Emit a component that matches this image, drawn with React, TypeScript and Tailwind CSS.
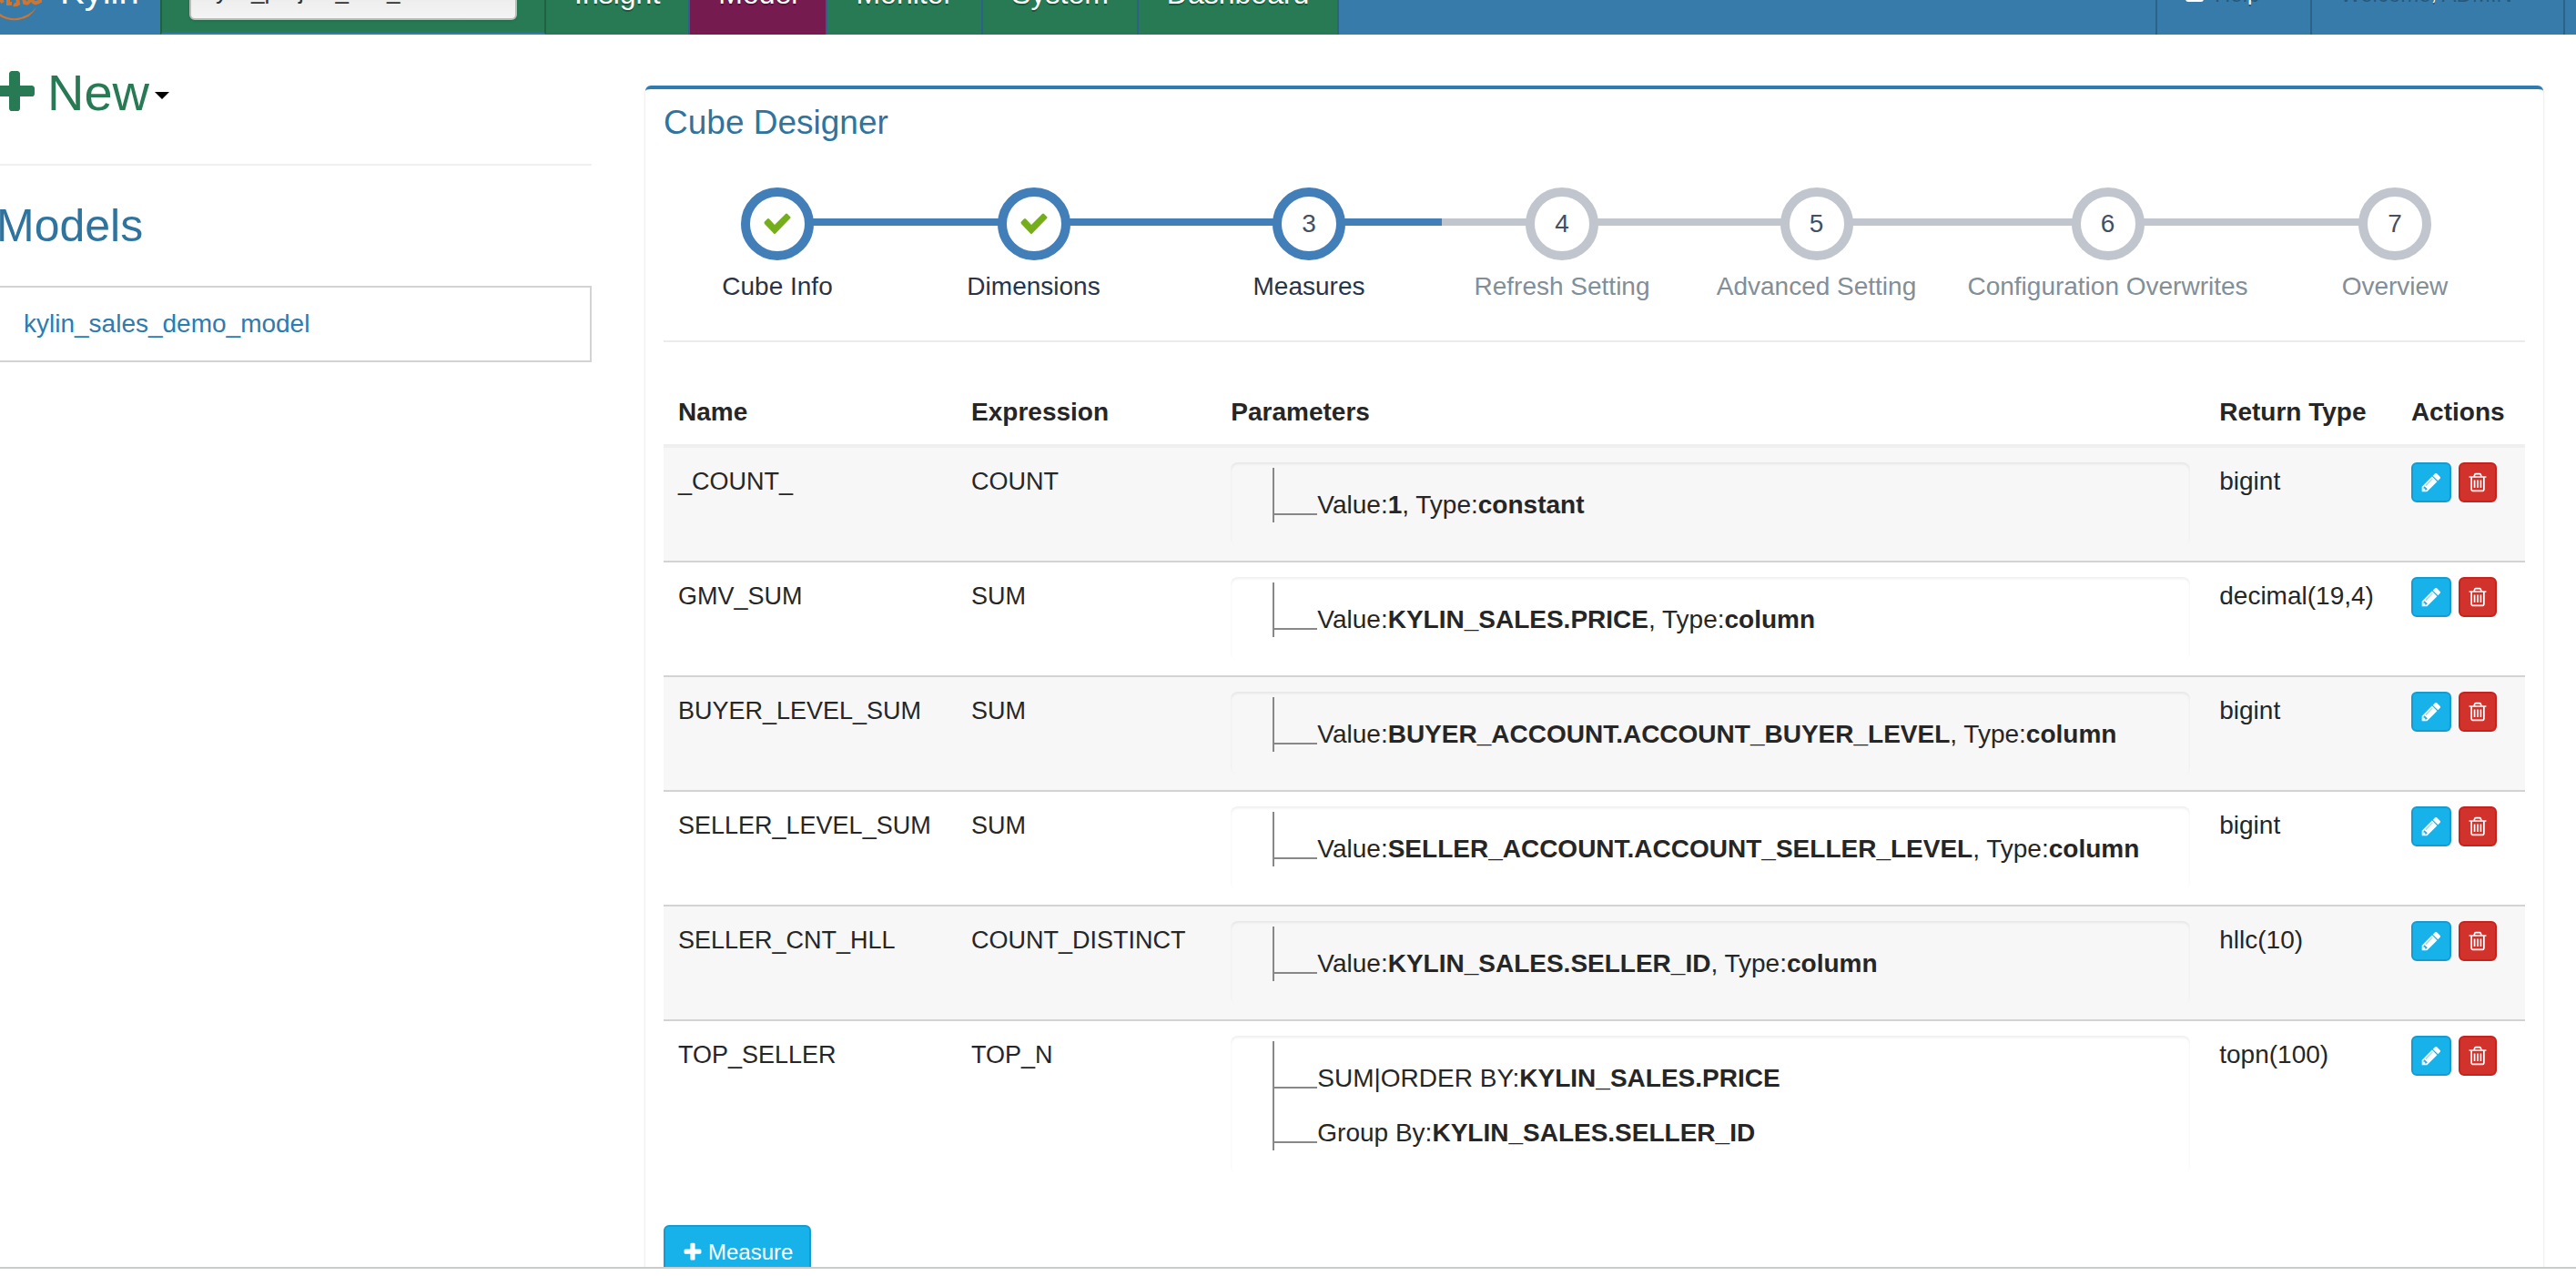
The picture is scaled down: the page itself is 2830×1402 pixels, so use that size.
import React from "react";

const PATHS = {
  pencil:
    "M491 1536l91-91-235-235-91 91v107h128v128h107zm523-928q0-22-22-22-10 0-17 7l-542 542q-7 7-7 17 0 22 22 22 10 0 17-7l542-542q7-7 7-17zm-54-192l416 416-832 832h-416v-416zm683 96q0 53-37 90l-166 166-416-416 166-165q36-38 90-38 53 0 91 38l235 234q37 39 37 91z",
  trash:
    "M704 736v576q0 14-9 23t-23 9h-64q-14 0-23-9t-9-23v-576q0-14 9-23t23-9h64q14 0 23 9t9 23zm256 0v576q0 14-9 23t-23 9h-64q-14 0-23-9t-9-23v-576q0-14 9-23t23-9h64q14 0 23 9t9 23zm256 0v576q0 14-9 23t-23 9h-64q-14 0-23-9t-9-23v-576q0-14 9-23t23-9h64q14 0 23 9t9 23zm128 724v-948h-896v948q0 22 7 40.5t14.5 27 10.5 8.5h832q3 0 10.5-8.5t14.5-27 7-40.5zm-672-1076h448l-48-117q-7-9-17-11h-317q-10 2-17 11zm928 32v64q0 14-9 23t-23 9h-96v948q0 83-47 143.5t-113 60.5h-832q-66 0-113-58.5t-47-141.5v-952h-96q-14 0-23-9t-9-23v-64q0-14 9-23t23-9h309l70-167q15-37 54-63t79-26h320q40 0 79 26t54 63l70 167h309q14 0 23 9t9 23z",
  plus: "M1600 736v192q0 40-28 68t-68 28h-416v416q0 40-28 68t-68 28h-192q-40 0-68-28t-28-68v-416h-416q-40 0-68-28t-28-68v-192q0-40 28-68t68-28h416v-416q0-40 28-68t68-28h192q40 0 68 28t28 68v416h416q40 0 68 28t28 68z",
};

function Icon({ name, className }: { name: keyof typeof PATHS; className: string }) {
  return (
    <svg viewBox="0 0 1792 1792" className={className} fill="currentColor" aria-hidden="true">
      <path d={PATHS[name]} />
    </svg>
  );
}

const NAV = [
  { label: "Insight", active: false },
  { label: "Model", active: true },
  { label: "Monitor", active: false },
  { label: "System", active: false },
  { label: "Dashboard", active: false },
];

function Header() {
  return (
    <header className="flex h-[38px] shrink-0 items-end overflow-hidden bg-[#377bab]">
      <a href="#" className="flex h-[100px] w-[176px] shrink-0 text-white">
        <svg viewBox="0 0 46 100" className="h-[100px] w-[46px]" fill="none" stroke="#d0752b" aria-hidden="true">
          <path d="M0 77Q8 83 18 82Q32 80 40 70Q34 82 20 84Q8 85 0 80Z" fill="#d0752b" stroke="none" />
          <path d="M0 59l3 6M9 60v6h4M19 58l1 8q-3 2-5 1M26 60l1 5q4 2 6-3M35 60q1 6 5 5t6-3" strokeWidth="4" />
        </svg>
        <span className="ml-5 pt-[32px] text-[40px] leading-[40px]">Kylin</span>
      </a>
      <div className="h-[100px] w-[424px] shrink-0 border-x-2 border-b-2 border-x-[#1f6143] border-b-[#377bab] bg-[#277a54] px-[30px] pt-[30px]">
        <select
          aria-label="Project"
          className="h-[54px] w-full appearance-none rounded-md border-2 border-[#bbb] bg-linear-to-b from-[#e4e4e4] to-[#f4f4f4] px-[14px] pb-[10px] text-[26px] text-[#333] shadow-sm"
        >
          <option>kylin_project_test_1</option>
        </select>
      </div>
      <nav className="flex h-[100px] shrink-0">
        {NAV.map((n) => (
          <a
            key={n.label}
            href="#"
            className={
              "border-r-2 border-[#2a628a] px-[31px] pt-[37px] text-[32px] leading-[36px] text-white text-shadow-[0_2px_0_rgba(0,0,0,0.3)] " +
              (n.active ? "bg-[#761b4f]" : "bg-[#277a54]")
            }
          >
            {n.label}
          </a>
        ))}
      </nav>
      <nav className="ml-auto flex h-[100px] w-[462px] shrink-0 text-[24px] leading-[32px] text-white text-shadow-[0_2px_0_rgba(0,0,0,0.3)]">
        <a href="#" className="flex w-[170px] border-l-2 border-[#2a628a] pt-[38px] pl-[31px]">
          <svg viewBox="0 0 20 28" className="mr-3 h-[28px] w-[20px]" fill="currentColor" aria-hidden="true">
            <rect x="0" y="4" width="20" height="22" rx="3" />
          </svg>
          Help
        </a>
        <a href="#" className="w-[280px] border-x-2 border-[#2a628a] pt-[38px] pl-[31px]">
          Welcome, ADMIN
        </a>
      </nav>
    </header>
  );
}

function Sidebar() {
  return (
    <aside className="w-[650px] shrink-0">
      <button type="button" className="mt-[28px] -ml-3 flex items-center text-[56px] leading-[72px] text-[#277a54]">
        <Icon name="plus" className="mr-2 size-[56px]" />
        New
        <svg viewBox="0 0 16 8" className="mt-[6px] ml-[6px] h-2 w-4" fill="#000" aria-hidden="true">
          <path d="M0 0h16L8 8z" />
        </svg>
      </button>
      <hr className="mt-[42px] border-t-2 border-[#f0f0f0]" />
      <h3 className="mt-[34px] -ml-1 text-[50px] leading-[64px] text-[#2f749f]">Models</h3>
      <div className="mt-[34px] -ml-[2px] border-2 border-[#d3d3d3] pl-[26px] text-[28px] leading-[80px]">
        <a href="#" className="text-[#2e7bb0]">
          kylin_sales_demo_model
        </a>
      </div>
    </aside>
  );
}

const STEPS = [
  "Cube Info",
  "Dimensions",
  "Measures",
  "Refresh Setting",
  "Advanced Setting",
  "Configuration Overwrites",
  "Overview",
];
const CURRENT = 2;

function Steps() {
  return (
    <ol className="mt-[46px] grid grid-cols-[250fr_313fr_292fr_264fr_295fr_345fr_286fr]">
      {STEPS.map((label, i) => {
        const reached = i <= CURRENT;
        const line = reached ? "bg-[#427eb8]" : "bg-[#c1c5cd]";
        return (
          <li key={label} className="flex flex-col items-center">
            <div className="flex w-full items-center">
              <span className={"-mt-[4px] h-2 flex-1 " + (i === 0 ? "bg-transparent" : line)} />
              <span
                className={
                  "-mx-px flex size-20 items-center justify-center rounded-full border-10 bg-white text-[28px] text-[#445062] " +
                  (reached ? "border-[#427eb8]" : "border-[#c1c5cd]")
                }
              >
                {i < CURRENT ? (
                  <svg viewBox="0 0 30 24" className="h-6 w-[30px]" fill="#75ae1b" aria-label="done">
                    <path d="M1 9.500L4 6.500q1-1 2 0l6 6.500L24 1q1-1 2 0l3 3q1 1 0 2L13 22.500q-1 1-2 0L1 12q-1-1.200 0-2.500z" />
                  </svg>
                ) : (
                  i + 1
                )}
              </span>
              <span className={"-mt-[4px] h-2 flex-1 " + (i === STEPS.length - 1 ? "bg-transparent" : line)} />
            </div>
            <span className={"mt-[10px] text-[28px] leading-[38px] whitespace-nowrap " + (reached ? "text-[#27344a]" : "text-[#828e98]")}>
              {label}
            </span>
          </li>
        );
      })}
    </ol>
  );
}

type Part = [string, string];
type Measure = { name: string; expr: string; params: Part[][]; ret: string };
const col = (v: string): Part[][] => [[["Value:", v], [", Type:", "column"]]];

const MEASURES: Measure[] = [
  { name: "_COUNT_", expr: "COUNT", params: [[["Value:", "1"], [", Type:", "constant"]]], ret: "bigint" },
  { name: "GMV_SUM", expr: "SUM", params: col("KYLIN_SALES.PRICE"), ret: "decimal(19,4)" },
  { name: "BUYER_LEVEL_SUM", expr: "SUM", params: col("BUYER_ACCOUNT.ACCOUNT_BUYER_LEVEL"), ret: "bigint" },
  { name: "SELLER_LEVEL_SUM", expr: "SUM", params: col("SELLER_ACCOUNT.ACCOUNT_SELLER_LEVEL"), ret: "bigint" },
  { name: "SELLER_CNT_HLL", expr: "COUNT_DISTINCT", params: col("KYLIN_SALES.SELLER_ID"), ret: "hllc(10)" },
  {
    name: "TOP_SELLER",
    expr: "TOP_N",
    params: [[["SUM|ORDER BY:", "KYLIN_SALES.PRICE"]], [["Group By:", "KYLIN_SALES.SELLER_ID"]]],
    ret: "topn(100)",
  },
];

function ParamTree({ params }: { params: Part[][] }) {
  return (
    <ul className="rounded-lg pt-[6px] pb-[26px] pl-[46px] shadow-[inset_0_2px_3px_rgba(0,0,0,0.07)]">
      {params.map((parts, i) => (
        <li key={i} className="flex h-[60px] border-l-2 border-[#888]">
          <span className="mt-[50px] h-[2px] w-[47px] shrink-0 bg-[#888]" />
          <span className="pt-[23px] leading-[36px] whitespace-nowrap">
            {parts.map(([k, v]) => (
              <React.Fragment key={k}>
                {k}
                <b>{v}</b>
              </React.Fragment>
            ))}
          </span>
        </li>
      ))}
    </ul>
  );
}

function MeasuresTable() {
  return (
    <table className="w-full table-fixed border-collapse text-left text-[28px] leading-[42px] text-[#262626]">
      <colgroup>
        <col className="w-[15.75%]" />
        <col className="w-[13.95%]" />
        <col className="w-[53.1%]" />
        <col className="w-[10.3%]" />
        <col className="w-[6.9%]" />
      </colgroup>
      <thead>
        <tr className="border-b-4 border-[#efefef]">
          {["Name", "Expression", "Parameters", "Return Type", "Actions"].map((h) => (
            <th key={h} className="px-4 pt-4 pb-[14px] font-bold whitespace-nowrap">
              {h}
            </th>
          ))}
        </tr>
      </thead>
      <tbody>
        {MEASURES.map((m) => (
          <tr key={m.name} className="border-b-2 border-[#d3d3d3] align-top last:border-b-0 odd:bg-[#f7f7f7]">
            <td className="px-4 py-4 text-[27px]">{m.name}</td>
            <td className="px-4 py-4 text-[27px]">{m.expr}</td>
            <td className="px-4 py-4">
              <ParamTree params={m.params} />
            </td>
            <td className="px-4 py-4 whitespace-nowrap">{m.ret}</td>
            <td className="px-4 py-4">
              <div className="flex gap-2">
                <button
                  type="button"
                  aria-label="Edit"
                  className="flex h-[44px] w-[44px] items-center justify-center rounded-md border-2 border-[#169bd0] bg-[#18b2ea] text-white"
                >
                  <Icon name="pencil" className="size-6" />
                </button>
                <button
                  type="button"
                  aria-label="Delete"
                  className="flex h-[44px] w-[42px] items-center justify-center rounded-md border-2 border-[#c7221c] bg-[#d2322c] text-white"
                >
                  <Icon name="trash" className="size-6" />
                </button>
              </div>
            </td>
          </tr>
        ))}
      </tbody>
    </table>
  );
}

export default function App() {
  return (
    <div className="flex h-screen flex-col overflow-hidden bg-white font-['Liberation_Sans',Arial,sans-serif]">
      <Header />
      <main className="flex min-h-0 flex-1 overflow-hidden">
        <Sidebar />
        <section className="mt-[56px] mr-[36px] ml-[59px] h-fit min-w-0 flex-1 rounded-md border-t-4 border-[#2e7bb0] px-5 pt-3 pb-10 shadow-[0_1px_3px_rgba(0,0,0,0.15)]">
          <h3 className="text-[37px] leading-[50px] text-[#2f749f]">Cube Designer</h3>
          <Steps />
          <hr className="mt-[40px] mb-[40px] border-t-2 border-[#ebebeb]" />
          <MeasuresTable />
          <button
            type="button"
            className="mt-[40px] flex h-[60px] items-center rounded-md border-2 border-[#169bd0] bg-[#18b2ea] px-[18px] text-[24px] text-white"
          >
            <Icon name="plus" className="mr-[5px] size-6" />
            Measure
          </button>
        </section>
      </main>
      <footer className="h-[10px] shrink-0 border-t-2 border-[#c9cccc] bg-white" />
    </div>
  );
}
